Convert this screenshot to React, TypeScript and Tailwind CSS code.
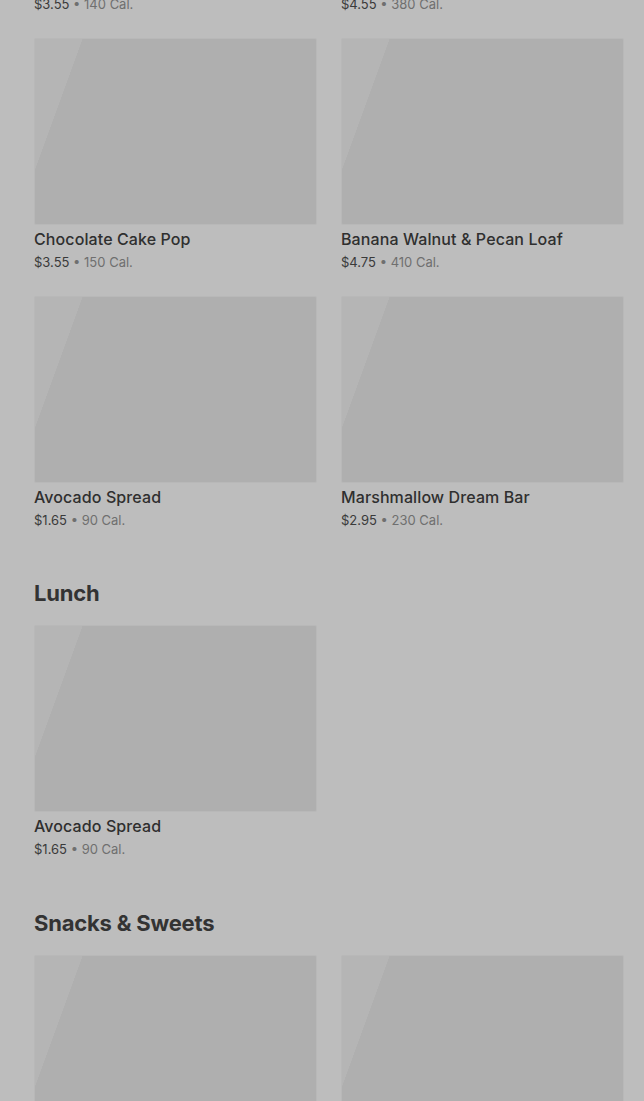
import React from "react";

interface Item {
    name: string;
    price: string;
    cal: number;
}

interface MenuSection {
    title?: string;
    className: string;
    items: Item[];
}

const sections: MenuSection[] = [
    {
        className: "",
        items: [
            { name: "Cheese Danish", price: "$3.55", cal: 140 },
            { name: "Butter Croissant", price: "$4.55", cal: 380 },
            { name: "Chocolate Cake Pop", price: "$3.55", cal: 150 },
            { name: "Banana Walnut & Pecan Loaf", price: "$4.75", cal: 410 },
            { name: "Avocado Spread", price: "$1.65", cal: 90 },
            { name: "Marshmallow Dream Bar", price: "$2.95", cal: 230 },
        ],
    },
    {
        title: "Lunch",
        className: "mt-[49px]",
        items: [{ name: "Avocado Spread", price: "$1.65", cal: 90 }],
    },
    {
        title: "Snacks & Sweets",
        className: "mt-[50px]",
        items: [
            { name: "Chocolate Chip Cookie", price: "$2.45", cal: 370 },
            { name: "Salted Caramel Bar", price: "$3.25", cal: 290 },
        ],
    },
];

const ItemCard: React.FC<{ item: Item }> = ({ item }) => (
    <div className="flex flex-col">
        <div className="h-[187px] rounded-[2px] border border-[#b8b8b8] bg-[linear-gradient(110deg,#b5b5b5_0%,#b5b5b5_13.6%,#afafaf_13.7%,#afafaf_100%)]" />
        <div className="mt-[2px] text-[16px] leading-[24px] font-medium text-[#2f2f2f] tracking-[0.1px]">
            {item.name}
        </div>
        <div className="mt-[1px] text-[13px] leading-[20px] text-[#3a3a3a]">
            {item.price}
            <span className="text-[#6f6f6f]"> • {item.cal} Cal.</span>
        </div>
    </div>
);

export default function App() {
    return (
        <div className="h-[1101px] overflow-hidden bg-[#bdbdbd] font-['Inter','Liberation_Sans',sans-serif]">
            <div className="-mt-[220px] pl-[34px] pr-[20px] flex flex-col">
                {sections.map((s, i) => (
                    <section key={i} className={s.className}>
                        {s.title && (
                            <h2 className="mb-[18px] text-[22px] leading-[28px] font-bold text-[#333333] tracking-[-0.2px]">
                                {s.title}
                            </h2>
                        )}
                        <div className="grid grid-cols-2 gap-x-6 gap-y-6">
                            {s.items.map((item, j) => (
                                <ItemCard key={j} item={item} />
                            ))}
                        </div>
                    </section>
                ))}
            </div>
        </div>
    );
}
